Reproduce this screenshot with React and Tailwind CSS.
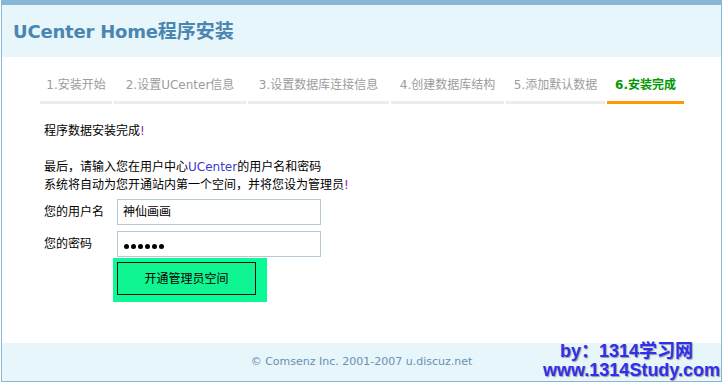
import React from "react";

const tabs = [
  { label: "1.安装开始", w: "w-[72px]" },
  { label: "2.设置UCenter信息", w: "w-[132px]" },
  { label: "3.设置数据库连接信息", w: "w-[141px]" },
  { label: "4.创建数据库结构", w: "w-[113px]" },
  { label: "5.添加默认数据", w: "w-[99px]" },
];

export default function App() {
  const body = { fontFamily: '"DejaVu Sans", "Noto Sans CJK SC", sans-serif' };
  return (
    <div className="relative w-[724px] h-[382px] bg-white overflow-hidden" style={body}>
      <div className="ml-[1px] w-[721px] h-[382px] border-x border-b border-t-[5px] border-[#87b7d4] flex flex-col">
        <div className="h-[52px] bg-[#e6f6fb] px-[11px] flex items-center">
          <h1 className="text-[18px] font-bold text-[#4a86b1] leading-none tracking-[-0.2px]">
            UCenter Home<span className="text-[19px] tracking-normal">程序安装</span>
          </h1>
        </div>

        <div className="mt-[18px] ml-[38px] flex gap-[2px] text-[12px] leading-[20px]">
          {tabs.map((t) => (
            <div
              key={t.label}
              className={`${t.w} text-center pb-[6px] border-b-[3px] border-[#ededed] text-[#9c9c9c] whitespace-nowrap`}
            >
              {t.label}
            </div>
          ))}
          <div className="w-[77px] text-center pb-[6px] border-b-[3px] border-[#ff9900] text-[#009900] font-bold whitespace-nowrap">
            6.安装完成
          </div>
        </div>

        <div className="pt-[18px] pl-[42px] text-[12px] leading-[18px] text-black">
          <p>
            程序数据安装完成<span className="text-[#a0229f]">!</span>
          </p>
          <p>&nbsp;</p>
          <p>
            最后，请输入您在用户中心<span className="text-[#3b3bcb]">UCenter</span>的用户名和密码
          </p>
          <p>
            系统将自动为您开通站内第一个空间，并将您设为管理员<span className="text-[#a0229f]">!</span>
          </p>

          <div className="mt-[5px] flex items-center">
            <span className="w-[73px]">您的用户名</span>
            <div className="w-[204px] h-[26px] border border-[#b6cad6] flex items-center pl-[5px] text-[12px]">
              神仙画画
            </div>
          </div>
          <div className="mt-[6px] flex items-center">
            <span className="w-[73px]">您的密码</span>
            <div className="w-[204px] h-[26px] border border-[#b6cad6] flex items-center pl-[6px] pt-[4px] gap-[2px]">
              {[0, 1, 2, 3, 4, 5].map((i) => (
                <span key={i} className="w-[5px] h-[5px] rounded-full bg-black" />
              ))}
            </div>
          </div>
          <div className="mt-[1px] ml-[69px] w-[154px] h-[44px] bg-[#0bfa95] pl-[4px] pt-[4px]">
            <button className="w-[139px] h-[33px] border border-[#111] bg-[#0ff592] text-[12px] text-black flex items-center justify-center">
              开通管理员空间
            </button>
          </div>
        </div>

        <div className="flex-1" />

        <div className="h-[38px] bg-[#e6f6fb] flex items-center justify-center">
          <span className="text-[11px] text-[#6b8fae]">© Comsenz Inc. 2001-2007 u.discuz.net</span>
        </div>
      </div>

      <div
        className="absolute left-[543px] top-[342px] text-[18px] font-bold leading-[19px] text-[#2f2ff0] [text-shadow:1px_1px_1px_#9a9a9a]"
        style={{ fontFamily: '"Liberation Sans", "Noto Sans CJK SC", sans-serif' }}
      >
        <div className="pl-[17px]">by：1314学习网</div>
        <div>www.1314Study.com</div>
      </div>
    </div>
  );
}
